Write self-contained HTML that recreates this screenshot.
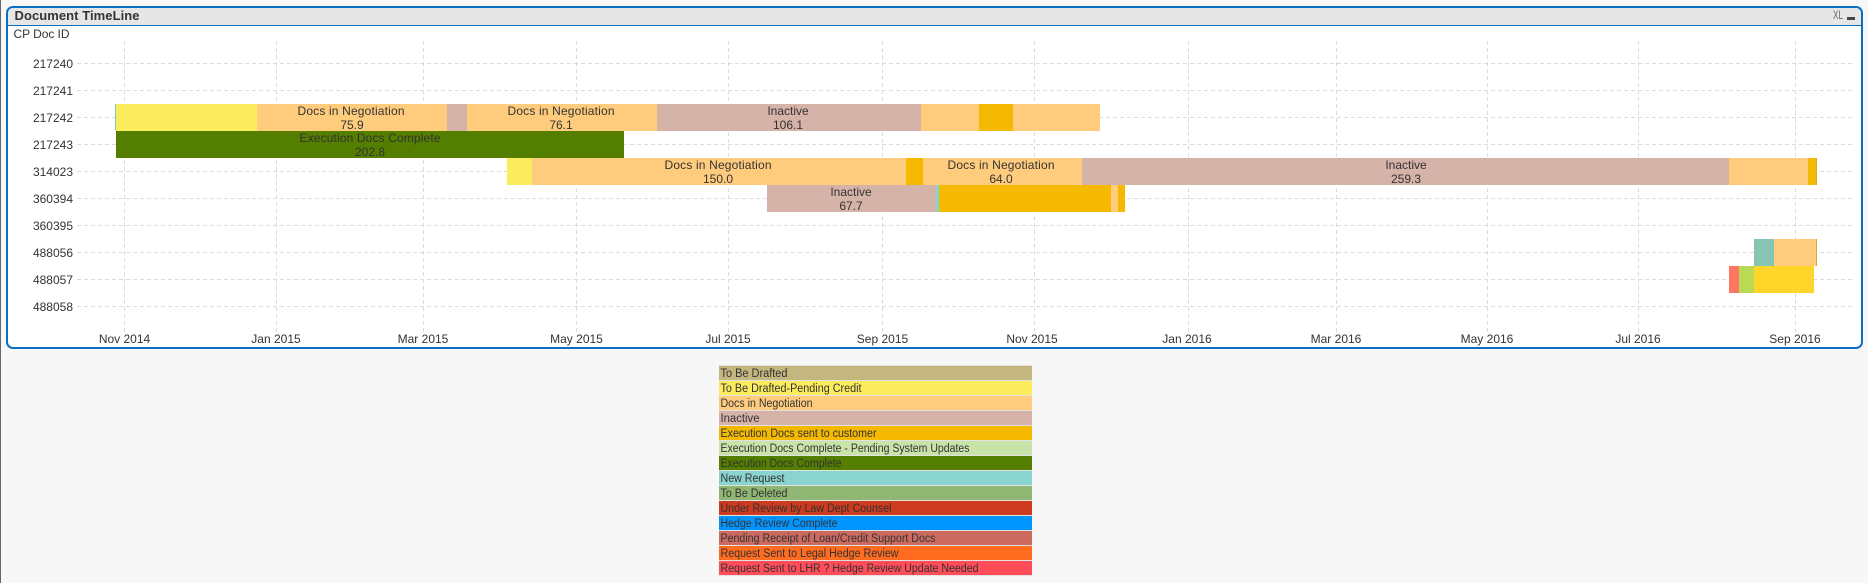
<!DOCTYPE html>
<html><head><meta charset="utf-8"><style>
html,body{margin:0;padding:0;background:#f7f7f7;width:1868px;height:583px;overflow:hidden}
svg{display:block}
text{font-family:"Liberation Sans",sans-serif;font-size:12px;fill:#333}
.l text{font-size:11.5px}
.m{text-anchor:middle}
.e{text-anchor:end}
.h line{stroke:#dcdcdc;stroke-width:1;stroke-dasharray:4 3}
</style></head><body>
<svg width="1868" height="583" viewBox="0 0 1868 583" xmlns="http://www.w3.org/2000/svg">
<rect width="1868" height="583" fill="#f7f7f7"/>
<rect x="0" y="0" width="1" height="583" fill="#666"/>
<rect x="7" y="7" width="1855" height="341" rx="6" fill="#fff" stroke="#0a6fc2" stroke-width="2"/>
<path d="M8 25V13a5 5 0 0 1 5-5H1856a5 5 0 0 1 5 5V25Z" fill="#e6e6e6"/>
<rect x="8" y="25" width="1853" height="1" fill="#0a6fc2"/>
<text x="14.5" y="20" style="font-size:13px;font-weight:bold" textLength="125">Document TimeLine</text>
<text x="1833" y="19" style="font-size:12px;fill:#666" textLength="10" lengthAdjust="spacingAndGlyphs">XL</text>
<rect x="1847" y="17" width="8" height="3" fill="#444"/>
<text x="13.5" y="38" textLength="56">CP Doc ID</text>

<g class="h">
<line x1="77" x2="1853" y1="63.5" y2="63.5"/><line x1="77" x2="1853" y1="90.5" y2="90.5"/><line x1="77" x2="1853" y1="117.5" y2="117.5"/><line x1="77" x2="1853" y1="144.5" y2="144.5"/><line x1="77" x2="1853" y1="171.5" y2="171.5"/><line x1="77" x2="1853" y1="198.5" y2="198.5"/><line x1="77" x2="1853" y1="225.5" y2="225.5"/><line x1="77" x2="1853" y1="252.5" y2="252.5"/><line x1="77" x2="1853" y1="279.5" y2="279.5"/><line x1="77" x2="1853" y1="306.5" y2="306.5"/>
<line y1="41" y2="333" x1="124.5" x2="124.5"/><line y1="41" y2="333" x1="276.5" x2="276.5"/><line y1="41" y2="333" x1="423.5" x2="423.5"/><line y1="41" y2="333" x1="576.5" x2="576.5"/><line y1="41" y2="333" x1="728.5" x2="728.5"/><line y1="41" y2="333" x1="882.5" x2="882.5"/><line y1="41" y2="333" x1="1034.5" x2="1034.5"/><line y1="41" y2="333" x1="1188.5" x2="1188.5"/><line y1="41" y2="333" x1="1336.5" x2="1336.5"/><line y1="41" y2="333" x1="1487.5" x2="1487.5"/><line y1="41" y2="333" x1="1638.5" x2="1638.5"/><line y1="41" y2="333" x1="1795.5" x2="1795.5"/>
</g>

<g class="e">
<text x="73" y="68">217240</text><text x="73" y="95">217241</text><text x="73" y="122">217242</text><text x="73" y="149">217243</text><text x="73" y="176">314023</text><text x="73" y="203">360394</text><text x="73" y="230">360395</text><text x="73" y="257">488056</text><text x="73" y="284">488057</text><text x="73" y="311">488058</text>
</g>
<g class="m">
<text x="124.5" y="343">Nov 2014</text><text x="276" y="343">Jan 2015</text><text x="423" y="343">Mar 2015</text><text x="576.5" y="343">May 2015</text><text x="728" y="343">Jul 2015</text><text x="882.5" y="343">Sep 2015</text><text x="1032" y="343">Nov 2015</text><text x="1187" y="343">Jan 2016</text><text x="1336" y="343">Mar 2016</text><text x="1487" y="343">May 2016</text><text x="1638" y="343">Jul 2016</text><text x="1795" y="343">Sep 2016</text>
</g>

<!-- 217242 -->
<rect x="115" y="104" width="1" height="27" fill="#87c4b4"/>
<rect x="116" y="104" width="141" height="27" fill="#fbec5d"/>
<rect x="257" y="104" width="190" height="27" fill="#ffcc7d"/>
<rect x="447" y="104" width="20" height="27" fill="#d6b3a8"/>
<rect x="467" y="104" width="190" height="27" fill="#ffcc7d"/>
<rect x="657" y="104" width="264" height="27" fill="#d6b3a8"/>
<rect x="921" y="104" width="58" height="27" fill="#ffcc7d"/>
<rect x="979" y="104" width="34" height="27" fill="#f4b900"/>
<rect x="1013" y="104" width="87" height="27" fill="#ffcc7d"/>
<!-- 217243 -->
<rect x="116" y="131" width="508" height="27" fill="#537e00"/>
<!-- 314023 -->
<rect x="507" y="158" width="25" height="27" fill="#fbec5d"/>
<rect x="532" y="158" width="374" height="27" fill="#ffcc7d"/>
<rect x="906" y="158" width="17" height="27" fill="#f4b900"/>
<rect x="923" y="158" width="159" height="27" fill="#ffcc7d"/>
<rect x="1082" y="158" width="647" height="27" fill="#d6b3a8"/>
<rect x="1729" y="158" width="79" height="27" fill="#ffcc7d"/>
<rect x="1808" y="158" width="8" height="27" fill="#f4b900"/>
<rect x="1816" y="158" width="1" height="27" fill="#e0a92a"/>
<!-- 360394 -->
<rect x="767" y="185" width="169" height="27" fill="#d6b3a8"/>
<rect x="936" y="185" width="3" height="27" fill="#89d4cf"/>
<rect x="939" y="185" width="172" height="27" fill="#f4b900"/>
<rect x="1111" y="185" width="7" height="27" fill="#ffcc7d"/>
<rect x="1118" y="185" width="7" height="27" fill="#f4b900"/>
<!-- 488056 -->
<rect x="1754" y="239" width="20" height="27" fill="#87c4b4"/>
<rect x="1774" y="239" width="42" height="27" fill="#ffcc7d"/>
<rect x="1816" y="239" width="1" height="27" fill="#e0a92a"/>
<!-- 488057 -->
<rect x="1729" y="266" width="10" height="27" fill="#ff7564"/>
<rect x="1739" y="266" width="15" height="27" fill="#bad955"/>
<rect x="1754" y="266" width="60" height="27" fill="#ffd52a"/>

<g class="m">
<text x="351" y="115" textLength="107">Docs in Negotiation</text><text x="352" y="129">75.9</text>
<text x="370" y="142" textLength="141">Execution Docs Complete</text><text x="370" y="156">202.8</text>
<text x="561" y="115" textLength="107">Docs in Negotiation</text><text x="561" y="129">76.1</text>
<text x="788" y="115">Inactive</text><text x="788" y="129">106.1</text>
<text x="718" y="169" textLength="107">Docs in Negotiation</text><text x="718" y="183">150.0</text>
<text x="1001" y="169" textLength="107">Docs in Negotiation</text><text x="1001" y="183">64.0</text>
<text x="1406" y="169">Inactive</text><text x="1406" y="183">259.3</text>
<text x="851" y="196">Inactive</text><text x="851" y="210">67.7</text>
</g>

<!-- legend -->
<rect x="719" y="365" width="313" height="211" fill="#e2e2e2"/>
<rect x="719" y="366" width="313" height="14" fill="#c4b67f"/>
<rect x="719" y="381" width="313" height="14" fill="#fbec5d"/>
<rect x="719" y="396" width="313" height="14" fill="#ffcc7d"/>
<rect x="719" y="411" width="313" height="14" fill="#d6b3a8"/>
<rect x="719" y="426" width="313" height="14" fill="#f4b900"/>
<rect x="719" y="441" width="313" height="14" fill="#c9e4aa"/>
<rect x="719" y="456" width="313" height="14" fill="#537e00"/>
<rect x="719" y="471" width="313" height="14" fill="#89d4cf"/>
<rect x="719" y="486" width="313" height="14" fill="#90b673"/>
<rect x="719" y="501" width="313" height="14" fill="#cc3a1f"/>
<rect x="719" y="516" width="313" height="14" fill="#0094ff"/>
<rect x="719" y="531" width="313" height="14" fill="#cc6a60"/>
<rect x="719" y="546" width="313" height="14" fill="#ff6b1f"/>
<rect x="719" y="561" width="313" height="14" fill="#ff4d5a"/>
<g class="l">
<text x="720.5" y="377" textLength="67" lengthAdjust="spacingAndGlyphs">To Be Drafted</text>
<text x="720.5" y="392" textLength="141" lengthAdjust="spacingAndGlyphs">To Be Drafted-Pending Credit</text>
<text x="720.5" y="407" textLength="92" lengthAdjust="spacingAndGlyphs">Docs in Negotiation</text>
<text x="720.5" y="422" textLength="39" lengthAdjust="spacingAndGlyphs">Inactive</text>
<text x="720.5" y="437" textLength="156" lengthAdjust="spacingAndGlyphs">Execution Docs sent to customer</text>
<text x="720.5" y="452" textLength="249" lengthAdjust="spacingAndGlyphs">Execution Docs Complete - Pending System Updates</text>
<text x="720.5" y="467" textLength="121" lengthAdjust="spacingAndGlyphs">Execution Docs Complete</text>
<text x="720.5" y="482" textLength="64" lengthAdjust="spacingAndGlyphs">New Request</text>
<text x="720.5" y="497" textLength="67" lengthAdjust="spacingAndGlyphs">To Be Deleted</text>
<text x="720.5" y="512" textLength="171" lengthAdjust="spacingAndGlyphs">Under Review by Law Dept Counsel</text>
<text x="720.5" y="527" textLength="117" lengthAdjust="spacingAndGlyphs">Hedge Review Complete</text>
<text x="720.5" y="542" textLength="215" lengthAdjust="spacingAndGlyphs">Pending Receipt of Loan/Credit Support Docs</text>
<text x="720.5" y="557" textLength="178" lengthAdjust="spacingAndGlyphs">Request Sent to Legal Hedge Review</text>
<text x="720.5" y="572" textLength="258" lengthAdjust="spacingAndGlyphs">Request Sent to LHR ? Hedge Review Update Needed</text>
</g>
</svg>
</body></html>
